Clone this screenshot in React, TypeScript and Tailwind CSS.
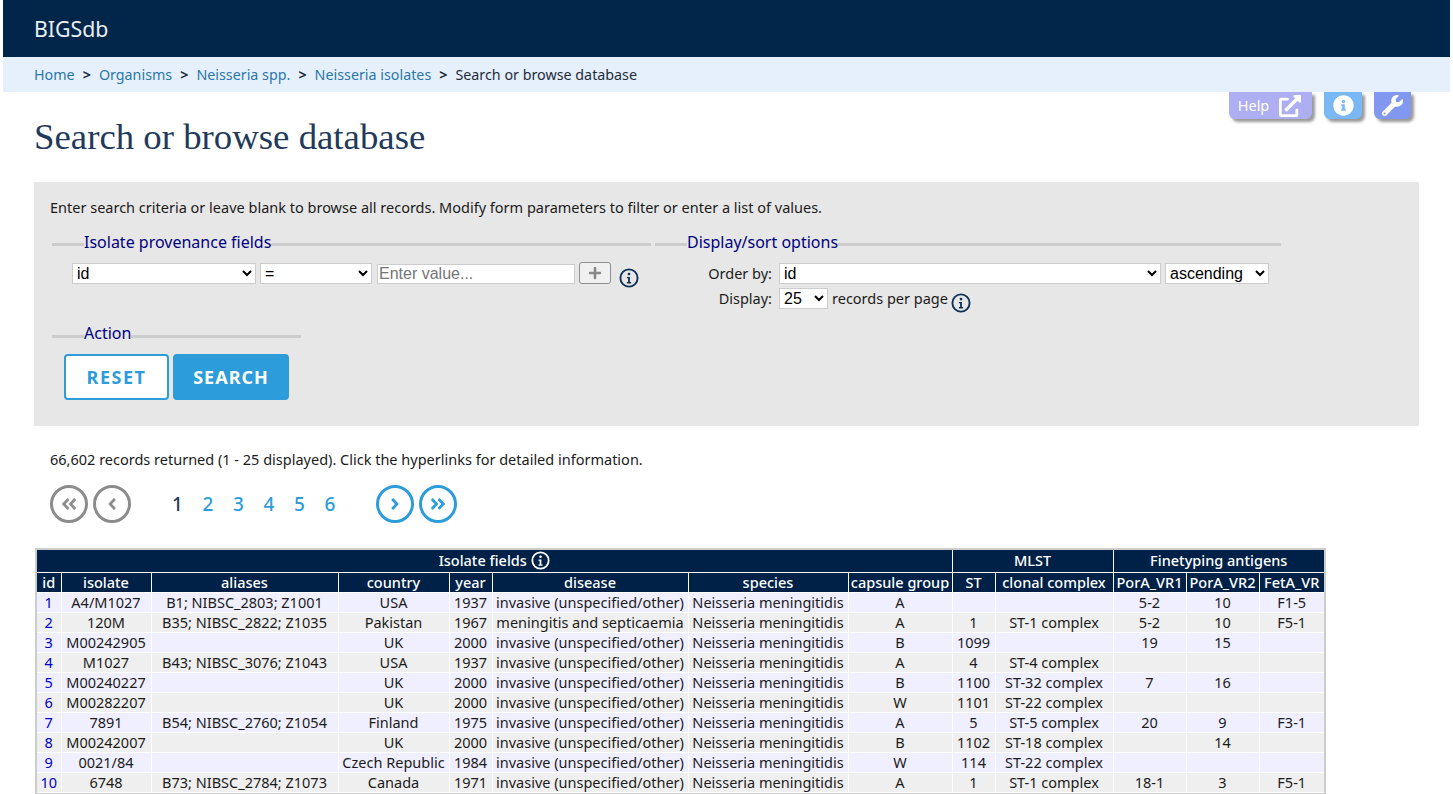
import { FaAngleDoubleLeft, FaAngleDoubleRight, FaAngleLeft, FaAngleRight, FaExternalLinkAlt, FaInfoCircle, FaPlus, FaWrench } from "react-icons/fa";

const bodyFont = "font-['Noto_Sans',sans-serif]";

const columns = [
  { label: "id", width: "w-[24px]" },
  { label: "isolate", width: "w-[90px]" },
  { label: "aliases", width: "w-[187px]" },
  { label: "country", width: "w-[111px]" },
  { label: "year", width: "w-[43px]" },
  { label: "disease", width: "w-[196px]" },
  { label: "species", width: "w-[160px]" },
  { label: "capsule group", width: "w-[104px]" },
  { label: "ST", width: "w-[43px]" },
  { label: "clonal complex", width: "w-[118px]" },
  { label: "PorA_VR1", width: "w-[73px]" },
  { label: "PorA_VR2", width: "w-[73px]" },
  { label: "FetA_VR", width: "w-[65px]" },
];

const inv = "invasive (unspecified/other)";
const nm = "Neisseria meningitidis";

const rows = [
  ["1", "A4/M1027", "B1; NIBSC_2803; Z1001", "USA", "1937", inv, nm, "A", "", "", "5-2", "10", "F1-5"],
  ["2", "120M", "B35; NIBSC_2822; Z1035", "Pakistan", "1967", "meningitis and septicaemia", nm, "A", "1", "ST-1 complex", "5-2", "10", "F5-1"],
  ["3", "M00242905", "", "UK", "2000", inv, nm, "B", "1099", "", "19", "15", ""],
  ["4", "M1027", "B43; NIBSC_3076; Z1043", "USA", "1937", inv, nm, "A", "4", "ST-4 complex", "", "", ""],
  ["5", "M00240227", "", "UK", "2000", inv, nm, "B", "1100", "ST-32 complex", "7", "16", ""],
  ["6", "M00282207", "", "UK", "2000", inv, nm, "W", "1101", "ST-22 complex", "", "", ""],
  ["7", "7891", "B54; NIBSC_2760; Z1054", "Finland", "1975", inv, nm, "A", "5", "ST-5 complex", "20", "9", "F3-1"],
  ["8", "M00242007", "", "UK", "2000", inv, nm, "B", "1102", "ST-18 complex", "", "14", ""],
  ["9", "0021/84", "", "Czech Republic", "1984", inv, nm, "W", "114", "ST-22 complex", "", "", ""],
  ["10", "6748", "B73; NIBSC_2784; Z1073", "Canada", "1971", inv, nm, "A", "1", "ST-1 complex", "18-1", "3", "F5-1"],
];

const InfoOutline = ({ className }: { className?: string }) => (
  <svg viewBox="0 0 20 20" className={className} fill="none">
    <circle cx="10" cy="10" r="8.6" stroke="currentColor" strokeWidth="1.9" />
    <circle cx="10" cy="6.1" r="1.35" fill="currentColor" />
    <path d="M7.9 8.9h3v5.2h1.2v1.3H7.9v-1.3h1.2v-3.9H7.9z" fill="currentColor" />
  </svg>
);

const Crumb = ({ label }: { label: string }) => (
  <>
    <a className="text-[#2a77a8]">{label}</a>
    <span className="mx-[8px] font-bold text-[#1c2b3a]">&gt;</span>
  </>
);

const PageCircle = ({ active, children }: { active?: boolean; children: React.ReactNode }) => (
  <span
    className={`flex h-[38px] w-[38px] items-center justify-center rounded-full border-[3px] text-[18px] ${
      active ? "border-[#2d9cdb] text-[#2d9cdb]" : "border-[#8c8c8c] text-[#8c8c8c]"
    }`}
  >
    {children}
  </span>
);

const selectCls =
  "h-[21px] border border-[#cccccc] bg-white font-['Liberation_Sans',sans-serif] text-[16px] leading-[19px] text-black";

const legendCls = "ml-[32px] pb-[4px] text-[16px] leading-[22px] text-[#000080]";

export default function App() {
  return (
    <div className={`h-[794px] overflow-hidden bg-white px-[3px] ${bodyFont} text-[14.5px] text-[#1b1b1b]`}>
      <header className="flex h-[57px] items-center bg-[#02264a] pl-[31px] text-[21.3px] text-[#e8eef4]">BIGSdb</header>
      <nav className="flex h-[35px] items-center bg-[#e6f0fc] pl-[31px] text-[14.3px] text-[#1f2c3a]">
        <Crumb label="Home" />
        <Crumb label="Organisms" />
        <Crumb label="Neisseria spp." />
        <Crumb label="Neisseria isolates" />
        <span>Search or browse database</span>
      </nav>

      <div className="flex h-0 justify-end gap-[12px] pr-[39px] text-white">
        <div className="flex h-[27px] w-[83px] shrink-0 items-center justify-center gap-[10px] rounded-b-[6px] bg-[#aeaef2] pr-[2px] text-[14.5px] shadow-[3px_3px_3px_#999]">
          Help <FaExternalLinkAlt className="text-[22px]" />
        </div>
        <div className="flex h-[27px] w-[38px] shrink-0 items-center justify-center rounded-b-[6px] bg-[#7ab8f5] text-[21px] shadow-[3px_3px_3px_#999]">
          <FaInfoCircle />
        </div>
        <div className="flex h-[27px] w-[37px] shrink-0 items-center justify-center rounded-b-[6px] bg-[#8298f0] text-[21px] shadow-[3px_3px_3px_#999]">
          <FaWrench />
        </div>
      </div>

      <main className="pl-[31px]">
        <h1 className="pt-[23px] font-['Liberation_Serif',serif] text-[36.8px] leading-[44px] text-[#1f3a5c]">
          Search or browse database
        </h1>

        <section className="mt-[23px] h-[244px] w-[1385px] bg-[#e7e7e7] pl-[16px] pt-[16px]">
          <p className="leading-[19px]">
            Enter search criteria or leave blank to browse all records. Modify form parameters to filter or enter a list of values.
          </p>

          <div className="mt-[14px] flex items-start">
            <fieldset className="ml-[2px] h-[91px] w-[599px] border-t-[3px] border-[#cccccc]">
              <legend className={legendCls}>Isolate provenance fields</legend>
              <div className="flex items-start pl-[20px] pt-[6px]">
                <select className={`${selectCls} w-[184px]`} defaultValue="id">
                  <option>id</option>
                </select>
                <select className={`${selectCls} ml-[4px] w-[112px]`} defaultValue="=">
                  <option>=</option>
                </select>
                <input
                  placeholder="Enter value..."
                  className="ml-[5px] mt-[1px] h-[20px] w-[198px] border border-[#cccccc] bg-white pl-[1px] font-['Liberation_Sans',sans-serif] text-[16px] placeholder:text-[#757575]"
                />
                <button className="ml-[4px] -mt-[1px] flex h-[22px] w-[32px] items-center justify-center rounded-[3px] border border-[#8f8f8f] bg-[#f0f0f0] text-[14px] text-[#888888]">
                  <FaPlus />
                </button>
                <InfoOutline className="ml-[8px] mt-[5px] h-[20px] w-[20px] text-[#0e3156]" />
              </div>
            </fieldset>

            <fieldset className="ml-[4px] h-[91px] w-[626px] border-t-[3px] border-[#cccccc]">
              <legend className={legendCls}>Display/sort options</legend>
              <div className="pl-[52px] pt-[6px]">
                <div className="flex items-center">
                  <span className="w-[65px] text-right">Order by:</span>
                  <select className={`${selectCls} ml-[7px] w-[382px]`} defaultValue="id">
                    <option>id</option>
                  </select>
                  <select className={`${selectCls} ml-[4px] w-[104px]`} defaultValue="ascending">
                    <option>ascending</option>
                  </select>
                </div>
                <div className="mt-[3px] flex items-center">
                  <span className="w-[65px] text-right">Display:</span>
                  <select className={`${selectCls} ml-[7px] w-[49px]`} defaultValue="25">
                    <option>25</option>
                  </select>
                  <span className="ml-[4px]">records per page</span>
                  <InfoOutline className="-mb-[4px] ml-[3px] mt-[4px] h-[20px] w-[20px] text-[#0e3156]" />
                </div>
              </div>
            </fieldset>
          </div>

          <fieldset className="ml-[2px] w-[249px] border-t-[3px] border-[#cccccc]">
            <legend className="ml-[32px] pb-[6px] text-[16px] leading-[22px] text-[#000080]">Action</legend>
            <div className="flex gap-[3px] pl-[12px] pt-[4px]">
              <button className="h-[46px] w-[105px] rounded-[4px] border-2 border-[#2d9cdb] bg-white text-[18px] font-bold tracking-[1.5px] text-[#2d9cdb]">
                RESET
              </button>
              <button className="ml-[1px] h-[46px] w-[116px] rounded-[4px] bg-[#2d9cdb] text-[18px] font-bold tracking-[1px] text-white">
                SEARCH
              </button>
            </div>
          </fieldset>
        </section>

        <p className="mt-[24px] pl-[16px] leading-[19px]">
          66,602 records returned (1 - 25 displayed). Click the hyperlinks for detailed information.
        </p>

        <div className="mt-[16px] flex items-center pl-[16px]">
          <div className="flex gap-[5px]">
            <PageCircle><FaAngleDoubleLeft /></PageCircle>
            <PageCircle><FaAngleLeft /></PageCircle>
          </div>
          <div className="ml-[41px] flex w-[183px] text-[19px] font-medium text-[#2d9cdb]">
            <span className="w-[30.5px] text-[#1f3a5c]">1</span>
            <span className="w-[30.5px]">2</span>
            <span className="w-[30.5px]">3</span>
            <span className="w-[30.5px]">4</span>
            <span className="w-[30.5px]">5</span>
            <span className="w-[30.5px]">6</span>
          </div>
          <div className="ml-[21px] flex gap-[5px]">
            <PageCircle active><FaAngleRight /></PageCircle>
            <PageCircle active><FaAngleDoubleRight /></PageCircle>
          </div>
        </div>

        <div className="ml-[1px] mt-[25px] w-[1291px] border-2 border-[#cccccc]">
          <table className="w-full table-fixed border-collapse text-center leading-[19px]">
            <colgroup>
              {columns.map((c) => (
                <col key={c.label} className={c.width} />
              ))}
            </colgroup>
            <thead className="bg-[#002147] font-medium text-white">
              <tr className="h-[22px]">
                <th colSpan={8} className="border border-white border-t-0 border-l-0 font-medium">
                  <span className="inline-flex items-center gap-[4px]">
                    Isolate fields <InfoOutline className="h-[19px] w-[19px]" />
                  </span>
                </th>
                <th colSpan={2} className="border border-white border-t-0 font-medium">MLST</th>
                <th colSpan={3} className="border border-white border-t-0 border-r-0 font-medium">Finetyping antigens</th>
              </tr>
              <tr className="h-[20px]">
                {columns.map((c) => (
                  <th key={c.label} className="overflow-hidden whitespace-nowrap border border-white first:border-l-0 last:border-r-0 font-medium">
                    {c.label}
                  </th>
                ))}
              </tr>
            </thead>
            <tbody>
              {rows.map((r, i) => (
                <tr key={r[0]} className={`h-[20px] ${i % 2 === 0 ? "bg-[#efefff]" : "bg-[#efefef]"}`}>
                  {r.map((cell, j) => (
                    <td key={j} className="overflow-hidden whitespace-nowrap border border-white first:border-l-0 last:border-r-0">
                      {j === 0 ? <a className="text-[#0000cc]">{cell}</a> : cell}
                    </td>
                  ))}
                </tr>
              ))}
            </tbody>
          </table>
        </div>
      </main>
    </div>
  );
}
